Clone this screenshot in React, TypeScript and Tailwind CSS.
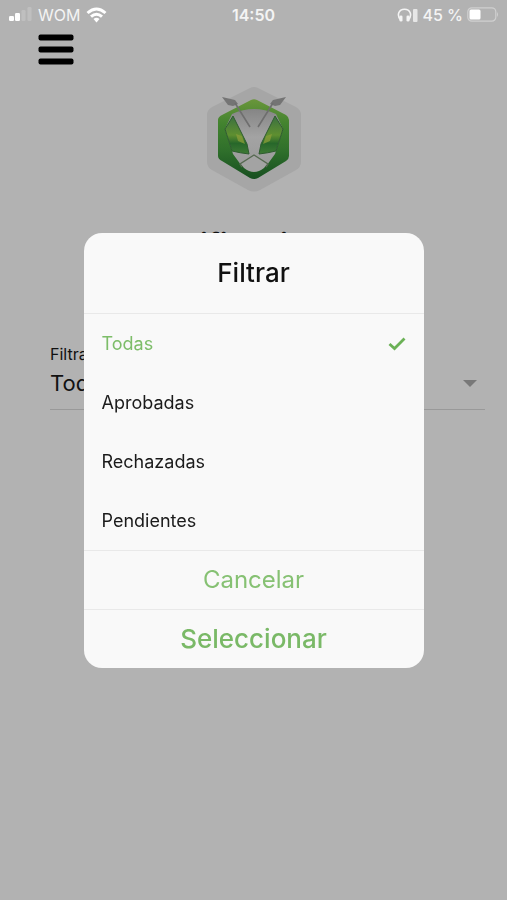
import { useState } from "react";

const options = ["Todas", "Aprobadas", "Rechazadas", "Pendientes"];

function StatusBar() {
  return (
    <div className="grid grid-cols-[1fr_auto_1fr] items-center h-[30px] pl-2 pr-2 text-[16px] leading-5 text-[#f4f4f4]">
      <div className="flex items-center gap-[6px]">
        <svg width="24" height="16" viewBox="0 0 24 16" aria-hidden="true">
          <rect x="1" y="9" width="5" height="5" rx="1.2" fill="#fff" />
          <rect x="7" y="6" width="5" height="8" rx="1.2" fill="#fff" />
          <rect x="13.500" y="3" width="4" height="11" rx="1.2" fill="#bfbfbf" />
          <rect x="19.500" y="0" width="4" height="14" rx="1.2" fill="#bfbfbf" />
        </svg>
        <span>WOM</span>
        <svg width="21" height="16" viewBox="0 0 21 16" fill="none" stroke="#fff" strokeWidth="3" aria-hidden="true">
          <path d="M1.5 6 Q10.5 -2 19.5 6" />
          <path d="M5 9.7 Q10.5 4.8 16 9.7" />
          <path d="M7.5 12 Q10.5 9.6 13.5 12 L10.5 15.4 Z" fill="#fff" stroke="none" />
        </svg>
      </div>
      <span className="font-semibold">14:50</span>
      <div className="flex items-center justify-end gap-1">
        <svg width="21" height="15" viewBox="0 0 21 15" fill="none" aria-hidden="true">
          <path d="M4 12.5 C-1 7 2 1.2 7.500 1.2 C13 1.2 16 7 11 12.5" stroke="#f4f4f4" strokeWidth="1.6" />
          <rect x="2.500" y="7.5" width="3" height="6" rx="1.3" fill="#f4f4f4" />
          <rect x="9.5" y="7.5" width="3" height="6" rx="1.3" fill="#f4f4f4" />
          <rect x="16" y="1" width="4.5" height="13" rx="1" fill="#e6e6e6" />
        </svg>
        <span className="font-medium">45 %</span>
        <svg width="32" height="16" viewBox="0 0 32 16" aria-hidden="true">
          <rect x="0.8" y="0.8" width="28" height="13.4" rx="4" fill="none" stroke="#d0d0d0" strokeWidth="1.2" />
          <rect x="2.5" y="2.500" width="11" height="10" rx="1.5" fill="#fff" />
          <path d="M30 5 Q32 7.500 30 10 Z" fill="#d0d0d0" />
        </svg>
      </div>
    </div>
  );
}

function Logo() {
  return (
    <svg width="96" height="106" viewBox="0 0 96 106" role="img" aria-label="Logo">
      <defs>
        <linearGradient id="shell" x1="0" y1="0" x2="0" y2="1">
          <stop offset="0" stopColor="#6a963b" />
          <stop offset="0.3" stopColor="#43832f" />
          <stop offset="0.65" stopColor="#2f6f2b" />
          <stop offset="1" stopColor="#174f20" />
        </linearGradient>
        <linearGradient id="face" x1="0" y1="0" x2="0" y2="1">
          <stop offset="0" stopColor="#858585" />
          <stop offset="0.5" stopColor="#a3a3a3" />
          <stop offset="1" stopColor="#9b9b9b" />
        </linearGradient>
        <linearGradient id="eye" x1="0" y1="0" x2="0" y2="1">
          <stop offset="0" stopColor="#3a7040" />
          <stop offset="0.5" stopColor="#5f8f30" />
          <stop offset="0.72" stopColor="#27672a" />
          <stop offset="1" stopColor="#3f7a35" />
        </linearGradient>
      </defs>
      <path d="M44 2 Q48 0 52 2 L90 21 Q95 24 95 29 V76 Q95 81 90 84 L54 104 Q48 107 42 104 L6 84 Q1 81 1 76 V29 Q1 24 6 21 Z" fill="#a6a6a6" />
      <path d="M45 14 Q48 12.5 51 14 L80 29 Q83 31 83 34 V70 Q83 73 80 75 L52 92 Q48 94 44 92 L16 75 Q12 73 12 70 V34 Q12 31 16 29 Z" fill="url(#shell)" />
      <path d="M26 28 Q48 18 70 28 L77 43 L69 68 L61 79 L48 69 L35 79 L27 68 L19 43 Z" fill="url(#face)" />
      <path d="M27 30 L19 43 L26 65 Q34 67 43 68 L41 58 L36 48 Z" fill="url(#eye)" stroke="#2f5c30" strokeWidth="1" />
      <path d="M69 30 L77 43 L70 65 Q62 67 53 68 L55 58 L60 48 Z" fill="url(#eye)" stroke="#2f5c30" strokeWidth="1" />
      <path d="M30 48 L36 50 L39 58 L32 55 Z M66 48 L60 50 L57 58 L64 55 Z" fill="#8b9d39" opacity="0.75" />
      <path d="M48 68 L62 77 L58 82 Q48 90 38 82 L34 77 Z" fill="#a3a3a3" />
      <path d="M36 81 L34 78 L48 69 L62 78 L60 81" fill="none" stroke="#566951" strokeWidth="1.4" />
      <path d="M16 11 L29 14 L32 18 L27 20 L22 19 Z M80 11 L67 14 L64 18 L69 20 L74 19 Z" fill="#747474" />
      <path d="M29 17 L44 41 M67 17 L52 41" fill="none" stroke="#6e6e6e" strokeWidth="1.6" />
    </svg>
  );
}

function FilterDialog({ selected, onSelect }: { selected: string; onSelect: (option: string) => void }) {
  return (
    <div className="fixed inset-0 flex items-center justify-center">
      <div role="dialog" aria-modal="true" aria-labelledby="filter-title" className="w-[340px] max-w-[90%] overflow-hidden rounded-[18px] bg-[#f9f9f9]">
        <h2 id="filter-title" className="border-b border-[#e9e9e9] py-6 text-center text-[26px] leading-8 font-medium text-[#111]">Filtrar</h2>
        <div role="radiogroup" aria-labelledby="filter-title">
          {options.map((option) => (
            <label key={option} className={`flex h-[59px] cursor-pointer items-center justify-between px-[18px] pt-px text-[18px] leading-6 ${selected === option ? "text-[#7dbd69]" : "text-[#1b1b1b]"}`}>
              <input type="radio" name="filter" value={option} checked={selected === option} onChange={() => onSelect(option)} className="sr-only" />
              {option}
              {selected === option && (
                <svg width="18" height="14" viewBox="0 0 18 14" fill="none" stroke="#6bb156" strokeWidth="2.8" aria-hidden="true">
                  <path d="M1.500 7 L6.500 11.500 L16.500 1.500" />
                </svg>
              )}
            </label>
          ))}
        </div>
        <button type="button" className="block h-[59px] w-full border-t border-[#e9e9e9] text-[24px] leading-8 text-[#86c173]">Cancelar</button>
        <button type="button" className="block h-[59px] w-full border-t border-[#e9e9e9] text-[26px] leading-8 font-medium text-[#7ab967]">Seleccionar</button>
      </div>
    </div>
  );
}

export default function App() {
  const [selected, setSelected] = useState("Todas");
  return (
    <div className="min-h-screen bg-[#b2b2b2] font-['Inter','Liberation_Sans',sans-serif]">
      <StatusBar />
      <button type="button" aria-label="Menú" className="ml-[38px] mt-1 block">
        <svg width="36" height="32" viewBox="0 0 36 32" aria-hidden="true">
          <rect x="0.5" y="0.5" width="35" height="6" rx="2" />
          <rect x="0.5" y="12.5" width="35" height="6" rx="2" />
          <rect x="0.5" y="24.5" width="35" height="6" rx="2" />
        </svg>
      </button>
      <main className="pt-5">
        <div className="flex justify-center"><Logo /></div>
        <h1 className="mt-9 text-center text-[30px] leading-8 font-semibold text-[#111]">Notificaciones</h1>
        <div className="mr-[22px] ml-[50px] mt-[84px] border-b border-[#999]">
          <label htmlFor="filter-select" className="block text-[16px] leading-5 text-[#111]">Filtrar por</label>
          <div className="flex items-center pt-[3px] pb-[10px] pr-2">
            <select id="filter-select" value={selected} onChange={(event) => setSelected(event.target.value)} className="h-8 flex-1 appearance-none bg-transparent text-[22px] leading-8 text-[#111]">
              {options.map((option) => (
                <option key={option}>{option}</option>
              ))}
            </select>
            <svg width="14" height="7" viewBox="0 0 14 7" aria-hidden="true">
              <path d="M0 0 H14 L7 7 Z" fill="#787878" />
            </svg>
          </div>
        </div>
      </main>
      <FilterDialog selected={selected} onSelect={setSelected} />
    </div>
  );
}
